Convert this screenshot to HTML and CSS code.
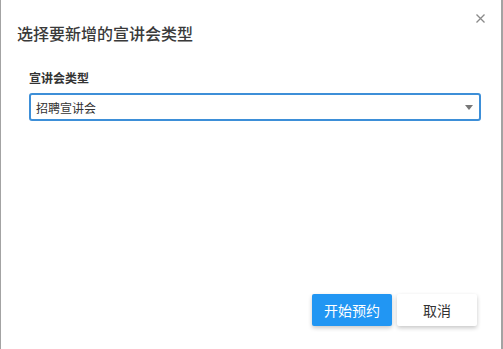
FILE: index.html
```html
<!DOCTYPE html>
<html lang="zh-CN">

<head>
    <meta charset="UTF-8">
    <meta name="viewport" content="width=device-width, initial-scale=1.0">
    <title>选择要新增的宣讲会类型</title>
    <link rel="stylesheet" href="styles.css">
</head>

<body>
    <!-- Dialog -->
    <div class="dialog">
        <div class="dialog-header">
            <h2 class="dialog-title">选择要新增的宣讲会类型</h2>
            <button class="dialog-close" aria-label="close">
                <svg width="9" height="9" viewBox="0 0 9 9">
                    <path d="M0.5 0.5 L8.5 8.5 M8.5 0.5 L0.5 8.5" stroke="#8a8a8a" stroke-width="1.3" fill="none" />
                </svg>
            </button>
        </div>

        <div class="dialog-body">
            <label class="field-label" for="talkType">宣讲会类型</label>
            <div class="select-box">
                <span class="select-value">招聘宣讲会</span>
                <span class="select-arrow"></span>
            </div>
        </div>

        <div class="dialog-footer">
            <button class="btn btn-primary">开始预约</button>
            <button class="btn btn-default">取消</button>
        </div>
    </div>
</body>

</html>
```

FILE: styles.css
```css
body {
    margin: 0;
    font-family: "Microsoft YaHei", "Noto Sans CJK SC", sans-serif;
    background-color: #fff;
    color: #333;
}

.dialog {
    height: 349px;
    box-sizing: border-box;
    border-left: 1px solid #a3a3a3;
    border-right: 2px solid #a3a3a3;
    display: flex;
    flex-direction: column;
}

.dialog-header {
    display: flex;
    justify-content: space-between;
    align-items: flex-start;
    padding: 0 16px 0 16px;
}

.dialog-title {
    margin: 22px 0 0 0;
    font-size: 16px;
    line-height: 22px;
    font-weight: 500;
    color: #3a3a3a;
}

.dialog-close {
    margin-top: 14px;
    padding: 0;
    border: none;
    background: none;
    width: 9px;
    height: 9px;
    display: flex;
    cursor: pointer;
}

.dialog-body {
    padding: 26px 20px 0 28px;
}

.field-label {
    display: block;
    font-size: 12px;
    line-height: 16px;
    font-weight: bold;
    color: #333;
    margin-bottom: 7px;
}

.select-box {
    height: 28px;
    box-sizing: border-box;
    border: 2px solid #3d8fd8;
    border-radius: 3px;
    display: flex;
    align-items: center;
    justify-content: space-between;
    padding: 0 6px 0 5px;
}

.select-value {
    font-size: 12px;
    color: #333;
}

.select-arrow {
    width: 0;
    height: 0;
    border-left: 4px solid transparent;
    border-right: 4px solid transparent;
    border-top: 5px solid #777;
}

.dialog-footer {
    margin-top: auto;
    display: flex;
    justify-content: flex-end;
    gap: 5px;
    padding: 0 24px 23px 0;
}

.btn {
    width: 80px;
    height: 32px;
    font-family: inherit;
    font-size: 14px;
    border: none;
    border-radius: 2px;
    cursor: pointer;
    box-shadow: 0 2px 4px rgba(0, 0, 0, 0.22);
}

.btn-primary {
    background-color: #2196f3;
    color: #fff;
}

.btn-default {
    background-color: #fff;
    color: #333;
}
```
